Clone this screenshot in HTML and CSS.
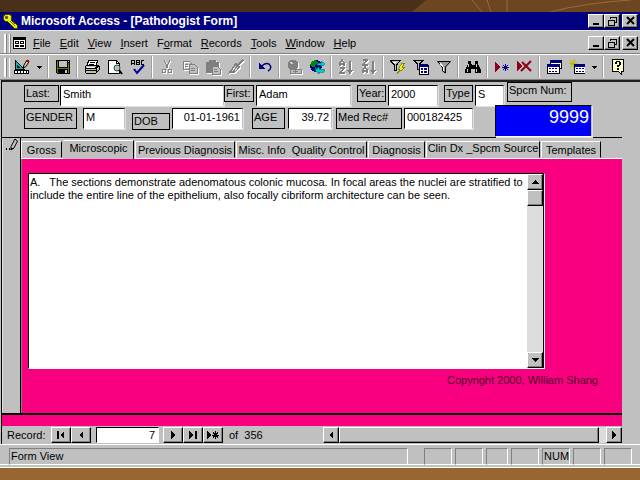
FILE: index.html
```
<!DOCTYPE html>
<html lang="en">
<head>
<meta charset="utf-8">
<title>Microsoft Access - [Pathologist Form]</title>
<link rel="stylesheet" href="styles.css">
</head>
<body>
<svg class="backdrop" width="228" height="12" viewBox="-14 0 228 12" aria-hidden="true">
  <path class="shade" d="M0 0H214V12H-14Z"/>
  <path class="ray" d="M46 0L56 12M61 0L65 12M81 0V12M124 12Q158 3 205 0"/>
</svg>
<div class="app">
  <header class="titlebar">
    <svg class="key" width="17" height="16" viewBox="0 0 17 16" aria-hidden="true"><path d="M1 3L4 1H8L10 4L9 7L15 12V15H12L6 9L3 8L1 6Z" fill="#ee0" stroke="#440"/><path d="M3 3H5V5H3ZM8 8L13 13" fill="#000080" stroke="#770"/><path d="M6 2L8 4" stroke="#fff"/></svg>
    <h1>Microsoft Access - [Pathologist Form]</h1>
    <div class="winbtns">
      <button aria-label="Minimize"><svg width="12" height="10" viewBox="0 0 12 10"><path d="M3 8H9" stroke-width="2"/></svg></button><button aria-label="Restore"><svg width="12" height="10" viewBox="0 0 12 10"><path d="M4 3V1H10V6H8M4 1.5H10M2 4.500H8V9H2ZM2 4H8"/></svg></button><button class="close" aria-label="Close"><svg width="12" height="10" viewBox="0 0 12 10"><path class="smooth" d="M3 1L10 8M10 1L3 8"/></svg></button>
    </div>
  </header>

  <nav class="menubar">
    <span class="grip"></span>
    <svg class="formicon" width="13" height="12" viewBox="0 0 13 12" aria-hidden="true"><path d="M0 0H13V12H0Z"/><path fill="#fff" d="M1 3H12V11H1Z"/><path d="M2 4H6V7H2ZM2 8H6V10H2ZM7 4H11V7H7ZM7 8H11V10H7Z"/><path fill="#fff" d="M3 5H5V6H3ZM8 5H10V6H8Z"/></svg>
    <a href="#"><u>F</u>ile</a><a href="#"><u>E</u>dit</a><a href="#"><u>V</u>iew</a><a href="#"><u>I</u>nsert</a><a href="#">F<u>o</u>rmat</a><a href="#"><u>R</u>ecords</a><a href="#"><u>T</u>ools</a><a href="#"><u>W</u>indow</a><a href="#"><u>H</u>elp</a>
    <div class="winbtns">
      <button aria-label="Minimize form"><svg width="12" height="10" viewBox="0 0 12 10"><path d="M3 8H9" stroke-width="2"/></svg></button><button aria-label="Restore form"><svg width="12" height="10" viewBox="0 0 12 10"><path d="M4 3V1H10V6H8M4 1.5H10M2 4.500H8V9H2ZM2 4H8"/></svg></button><button class="close" aria-label="Close form"><svg width="12" height="10" viewBox="0 0 12 10"><path class="smooth" d="M3 1L10 8M10 1L3 8"/></svg></button>
    </div>
  </nav>

  <div class="toolbar" role="toolbar" aria-label="Form view">
    <span class="grip"></span>
    <button aria-label="Design view"><svg viewBox="0 0 16 16"><path fill="#0bb" stroke="#000" d="M1.500 1.500L10.500 10.500H1.500Z"/><path fill="#c0c0c0" stroke="#000" d="M3.500 6.500L5.500 8.500H3.500Z"/><path fill="#fff" stroke="#000" d="M.5 11.500H14.500V14.500H.5Z"/><path d="M3 12H4V14H3ZM6 12H7V14H6ZM9 12H10V14H9ZM12 12H13V14H12Z"/><path class="smooth" fill="#dd8" stroke="#000" d="M9 9L10 6L13 1L15 2.500L12 7.500Z"/><path fill="#a00" d="M12 1H15V3H12Z"/></svg></button>
    <button class="caret" aria-label="More views"><svg viewBox="0 0 5 3"><path d="M0 0H5L3 3H2Z"/></svg></button>
    <i></i>
    <button aria-label="Save"><svg viewBox="0 0 16 16"><path d="M1 1H15V15H2L1 14Z"/><path fill="#770" d="M2 2H3V14H2ZM13 4H14V14H13ZM3 9H13V10H3Z"/><path fill="#c0c0c0" d="M4 2H12V8H4ZM13 2H14V3H13ZM10 11H12V14H10Z"/></svg></button>
    <i></i>
    <button aria-label="Print"><svg viewBox="0 0 16 16"><path fill="#fff" stroke="#000" d="M5 1H14L12 6H3Z"/><path stroke="#000" d="M6 3H11M5 5H10"/><path fill="#c0c0c0" stroke="#000" d="M1 8L3 6H14L15 7V11L12 14H2L1 12Z"/><path stroke="#000" d="M1 9H12L15 7M2 11H12M12 9V14"/><path stroke="#fff" d="M3 8H11"/><path stroke="#cc0" d="M8 12H11"/></svg></button>
    <button aria-label="Print preview"><svg viewBox="0 0 16 16"><path fill="#fff" stroke="#000" d="M1.500 1H9L12 4V14.500H1.500Z"/><path fill="none" stroke="#000" d="M9 1V4H12"/><circle class="smooth" cx="10" cy="9" r="3" fill="#9cc" stroke="#444"/><path class="smooth" stroke="#000" stroke-width="2" d="M12 11L15 15"/></svg></button>
    <button aria-label="Spelling"><svg viewBox="0 0 16 16"><path fill="none" stroke="#000" d="M1.500 6V2L3 1L4.500 2V6M1 4H5M6.500 1V5.500H9V1.500H6.500M6 3.500H9M14 1.500H11.500V5.500H14"/><path class="smooth" fill="none" stroke="#00009c" stroke-width="2" d="M4 10L7 14L14 6"/></svg></button>
    <i></i>
    <button class="off" disabled aria-label="Cut"><svg viewBox="0 0 16 16"><path d="M5 1L9 9M11 1L7 9"/><circle cx="5" cy="12" r="2"/><circle cx="11" cy="12" r="2"/></svg></button>
    <button class="off" disabled aria-label="Copy"><svg viewBox="0 0 16 16"><path d="M1 2H7L9 4V10H1ZM3 5H6M3 7H6"/><path class="sheet" d="M7 5H12L15 8V14H7ZM9 9H13M9 11H13"/></svg></button>
    <button class="off" disabled aria-label="Paste"><svg viewBox="0 0 16 16"><path class="solid" d="M1 3H4V1H10V3H13V13H1Z"/><path class="sheet" d="M7 7H12L15 10V15H7ZM9 10H12M9 12H13"/></svg></button>
    <button class="off" disabled aria-label="Format painter"><svg viewBox="0 0 16 16"><path class="solid" d="M8 4L12 8L7 13L1 14Z"/><path class="thick" d="M10 6L15 1"/><path class="glint" d="M4 12L8 7M7 12L10 8"/></svg></button>
    <i></i>
    <button aria-label="Undo"><svg viewBox="0 0 16 16"><path fill="#000080" d="M2 4V10H8Z"/><path class="smooth" fill="none" stroke="#000080" stroke-width="1.500" d="M4 8Q8 3 12 5Q16 9 11 12"/></svg></button>
    <i></i>
    <button class="off" disabled aria-label="Insert hyperlink"><svg viewBox="0 0 16 16"><circle class="solid" cx="7" cy="6" r="5"/><path class="sheet" d="M4 10H9V14H4ZM9 10H15V14H9ZM7 12H12"/><path class="glint" d="M4 3L7 5"/></svg></button>
    <button aria-label="Web toolbar"><svg viewBox="0 0 16 16"><circle cx="7" cy="7" r="6" fill="#000090"/><path fill="#080" d="M3 2L7 1L9 4L6 6L7 9L4 8L1 6ZM6 9L9 10L7 13Z"/><path fill="#0cc" stroke="#055" stroke-width=".5" d="M8 4H12V2L16 5L12 8V6H8ZM15 10H10V8L6 11.500L10 15V13H15Z"/></svg></button>
    <i></i>
    <button class="off" disabled aria-label="Sort ascending"><svg viewBox="0 0 16 16"><path class="bold" d="M2 7V4L4 1L6 4V7M2 5H6M2 9H6L2 14H7M12 2V14M10 11L12 14L14 11"/></svg></button>
    <button class="off" disabled aria-label="Sort descending"><svg viewBox="0 0 16 16"><path class="bold" d="M2 1H6L2 6H7M2 14V11L4 8L6 11V14M2 12H6M12 2V14M10 11L12 14L14 11"/></svg></button>
    <i></i>
    <button aria-label="Filter by selection"><svg viewBox="0 0 16 16"><path fill="#c0c0c0" stroke="#000" d="M0 1.500H10L6.500 6V11H4.500V6Z"/><path stroke="#fff" d="M3 3H6"/><path fill="#ee0" stroke="#660" stroke-width=".7" d="M12 4H15L12 8H15L7 15L10 10H8Z"/></svg></button>
    <button aria-label="Filter by form"><svg viewBox="0 0 16 16"><path fill="#c0c0c0" stroke="#000" d="M1 1.500H10L6.500 5V10H4.500V5Z"/><path fill="#fff" stroke="#000" d="M6 6H15V15H6Z"/><path fill="#000080" d="M6 5H15V8H6ZM8 9H10V11H8ZM11 9H14V11H11ZM8 12H10V14H8ZM11 12H14V14H11Z"/></svg></button>
    <button aria-label="Apply filter"><svg viewBox="0 0 16 16"><path class="smooth" fill="#999" stroke="#000" d="M1.500 2.500H14.500L9.500 8V14L6.500 12V8Z"/><path stroke="#fff" d="M4 4L7 8V12"/></svg></button>
    <i></i>
    <button aria-label="Find"><svg viewBox="0 0 16 16"><path d="M3 2H6V5L7 6H9L10 5V2H13V5L16 11V14H10V10H6V14H0V11L3 5Z"/><path stroke="#ccc" d="M2 10V13M4 5L3 8M11 10V13M11 5V8"/></svg></button>
    <i></i>
    <button aria-label="New record"><svg viewBox="0 0 16 16"><path fill="#900018" d="M1 3L6 8L1 13Z"/><path stroke="#000090" d="M11.500 5V12M8 8.500H15M9 6L14 11M14 6L9 11"/></svg></button>
    <button aria-label="Delete record"><svg viewBox="0 0 16 16"><path fill="#900018" d="M0 2L5 7L0 12Z"/><path class="smooth" stroke="#900018" stroke-width="2" d="M5 3L14 12M14 2L4 12"/></svg></button>
    <i></i>
    <button aria-label="Database window"><svg viewBox="0 0 16 16"><path fill="#fff" stroke="#000" d="M4 1.500H15V9H4Z"/><path fill="#000080" d="M4 1H15V4H4Z"/><path fill="#fff" stroke="#000" d="M1 5.500H13V14.500H1Z"/><path fill="#000080" d="M1 5H13V8H1ZM3 9H5V10H3ZM6 9H8V10H6ZM9 9H11V10H9ZM3 12H5V13H3ZM6 12H8V13H6ZM9 12H11V13H9Z"/></svg></button>
    <button aria-label="New object"><svg viewBox="0 0 16 16"><path stroke="#bb0" d="M4 0V9M0 4.500H8M1 1L7 8M7 1L1 8"/><path fill="#fff" stroke="#000" d="M5 5.500H16V14.500H5Z"/><path fill="#000080" d="M5 5H16V8H5ZM7 9H9V10H7ZM10 9H12V10H10ZM13 9H15V10H13ZM7 12H9V13H7ZM10 12H12V13H10ZM13 12H15V13H13Z"/></svg></button>
    <button class="caret" aria-label="More objects"><svg viewBox="0 0 5 3"><path d="M0 0H5L3 3H2Z"/></svg></button>
    <i></i>
    <button aria-label="Help"><svg viewBox="0 0 16 16"><path fill="#ffffc8" stroke="#000" d="M2.500 .5H13.500V12.500H11.500V15.500L8.500 12.500H2.500Z"/><path d="M5 3H6V2H10V3H11V6H10V7H9V8H7V6H9V3H7V5H5ZM7 9H9V11H7Z"/></svg></button>
  </div>

  <main class="form">
    <section class="patient">
      <div class="row top">
        <label for="last">Last:</label><input id="last" class="w-last" value="Smith">
        <label for="first" class="l-first">First:</label><input id="first" class="w-first" value="Adam">
        <label for="year" class="l-year">Year:</label><input id="year" class="w-year" value="2000">
        <label for="type" class="l-type">Type</label><input id="type" class="w-type" value="S">
        <label for="spcm" class="l-spcm">Spcm Num:</label>
      </div>
      <div class="row bottom">
        <label for="gender" class="l-gender">GENDER</label><input id="gender" class="w-gender" value="M">
        <label for="dob" class="l-dob">DOB</label><input id="dob" class="w-dob" value="01-01-1961">
        <label for="age" class="l-age">AGE</label><input id="age" class="w-age" value="39.72">
        <label for="med" class="l-med">Med Rec#</label><input id="med" class="w-med" value="000182425">
        <input id="spcm" class="w-spcm" value="9999">
      </div>
    </section>

    <div class="record">
      <div class="selector">
        <svg width="14" height="14" viewBox="0 0 14 14" aria-hidden="true"><path d="M1 10H2V12H1ZM4 10H5V12H4Z"/><path class="smooth" fill="#c0c0c0" stroke="#000" d="M10 1L12.500 3L9 10L6 12V8.500Z"/><path d="M6 10H8L6 13Z"/></svg>
      </div>
      <div class="pages">
        <div class="tabs" role="tablist">
          <button role="tab" class="t-gross">Gross</button><button role="tab" class="t-micro" aria-selected="true">Microscopic</button><button role="tab" class="t-prev">Previous Diagnosis</button><button role="tab" class="t-misc">Misc. Info&nbsp; Quality Control</button><button role="tab" class="t-diag">Diagnosis</button><button role="tab" class="t-clin">Clin Dx _Spcm Source</button><button role="tab" class="t-temp">Templates</button>
        </div>
        <div class="page" role="tabpanel">
          <div class="memo">
            <textarea aria-label="Microscopic description">A.&nbsp;&nbsp; The sections demonstrate adenomatous colonic mucosa. In focal areas the nuclei are stratified to include the entire line of the epithelium, also focally cibriform architecture can be seen.</textarea>
            <div class="vscroll">
              <button aria-label="Scroll up"><svg width="8" height="4" viewBox="0 0 8 4"><path d="M0 4L4 0L8 4Z"/></svg></button>
              <span class="thumb"></span>
              <button class="down" aria-label="Scroll down"><svg width="8" height="4" viewBox="0 0 8 4"><path d="M0 0H8L4 4Z"/></svg></button>
            </div>
          </div>
          <p class="copyright">Copyright 2000, William Shang</p>
        </div>
      </div>
    </div>
    <div class="formfoot"></div>

    <div class="recnav">
      <label for="rec">Record:</label>
      <button aria-label="First record"><svg viewBox="0 0 12 8"><path d="M2 0H4V8H2ZM9 0V8L5 4Z"/></svg></button><button aria-label="Previous record"><svg viewBox="0 0 12 8"><path d="M8 0V8L4 4Z"/></svg></button>
      <input id="rec" value="7">
      <button aria-label="Next record"><svg viewBox="0 0 12 8"><path d="M4 0V8L8 4Z"/></svg></button><button aria-label="Last record"><svg viewBox="0 0 12 8"><path d="M2 0V8L6 4ZM8 0H10V8H8Z"/></svg></button><button aria-label="Add record"><svg viewBox="0 0 12 8"><path d="M0 0V8L4 4Z"/><path stroke="#000" d="M8.500 0V8M5 4H12M6 1.500L11 6.500M11 1.500L6 6.500"/></svg></button>
      <span class="of">of&nbsp; 356</span>
      <div class="hscroll">
        <button aria-label="Scroll left"><svg viewBox="0 0 12 8"><path d="M8 0V8L4 4Z"/></svg></button><span class="thumb"></span><button aria-label="Scroll right"><svg viewBox="0 0 12 8"><path d="M4 0V8L8 4Z"/></svg></button>
      </div>
    </div>
  </main>

  <footer class="status">
    <span class="msg">Form View</span>
    <span></span><span></span><span class="narrow"></span><span></span><span>NUM</span><span></span><span></span>
  </footer>
</div>
</body>
</html>
```
FILE: styles.css
```
* { box-sizing: border-box; }

body {
  margin: 0;
  min-height: 100vh;
  padding: 12px 0;
  display: flex;
  flex-direction: column;
  background: linear-gradient(#4b3019 12px, #996633 30px);
  font: 11px/13px "Liberation Sans", Arial, sans-serif;
  color: #000;
}

.backdrop { position: absolute; top: 0; right: 0; }
.backdrop .shade { fill: #6b4621; shape-rendering: auto; }
.backdrop .ray { fill: none; stroke: #a06838; shape-rendering: auto; }

.app { flex: 1; display: flex; flex-direction: column; background: #c0c0c0; }
svg { display: block; flex: none; shape-rendering: crispEdges; }
.smooth { shape-rendering: auto; }
button, input, textarea { font: inherit; color: inherit; margin: 0; padding: 0; border-radius: 0; }
button { display: flex; align-items: center; justify-content: center; background: #c0c0c0; border: 0; }

/* Title bar */
.titlebar { height: 18px; display: flex; align-items: center; padding: 0 2px; gap: 2px; background: #000080; color: #fff; }
.titlebar h1 { margin: 0; flex: 1; font-size: 12px; line-height: 18px; }

.winbtns { display: flex; margin-left: auto; }
.winbtns button { width: 16px; height: 14px; border: 1px solid; border-color: #fff #000 #000 #fff; box-shadow: inset -1px -1px #808080; color: #000; }
.winbtns .close { margin-left: 2px; }
.winbtns path { fill: none; stroke: #000; }
.winbtns .smooth { stroke-width: 2px; }

/* Menu bar */
.menubar { height: 24px; display: flex; align-items: center; gap: 9px; padding: 2px 2px 0 4px; border-top: 1px solid #e8e8e8; border-bottom: 1px solid #808080; }
.menubar a { color: #000; text-decoration: none; }
.formicon { margin-right: -2px; }
.grip { flex: none; width: 6px; height: 19px; border: solid; border-width: 0 1px 0 2px; border-color: #fff; background: linear-gradient(90deg, #808080 1px, #c0c0c0 1px); box-shadow: 1px 0 #808080; }
.menubar .grip { margin-right: -6px; }

/* Toolbar */
.toolbar { height: 26px; display: flex; align-items: center; padding-left: 4px; border-top: 1px solid #fff; border-bottom: 1px solid #808080; }
.toolbar button { width: 23px; height: 22px; flex: none; }
.toolbar button svg { width: 16px; height: 16px; }
.toolbar .caret { width: 12px; }
.toolbar .caret svg { width: 5px; height: 3px; }
.toolbar i { flex: none; width: 2px; height: 22px; margin: 0 2px; background: linear-gradient(90deg, #a0a0a0 50%, #fff 50%); }
.off path, .off circle { fill: none; stroke: #808080; }
.off .solid { fill: #808080; }
.off .sheet { fill: #c0c0c0; }
.off .thick { stroke-width: 2px; }
.off .bold { stroke-width: 1.5px; }
.off .glint { stroke: #ddd; }
.off svg { filter: drop-shadow(1px 1px #fff); }

/* Form */
.form { flex: 1; display: flex; flex-direction: column; margin: 0 0 0 1px; border-top: 2px solid #202020; border-left: 1px solid #000; padding-right: 18px; }
.patient { border-bottom: 1px solid #000; padding: 0 30px 0 22px; }
.row { display: flex; align-items: flex-start; }
.row label { flex: none; height: 17px; padding: 0 1px; border: 1px solid #000; line-height: 15px; white-space: nowrap; }
.row input { flex: none; height: 21px; padding: 0 2px 3px; background: #fff; border: 1px solid; border-color: #000 #c0c0c0 #fff #000; box-shadow: 1px 1px #e0e0e0; min-width: 0; }
.top { height: 23px; padding-top: 3px; }
.top label:first-child { width: 35px; margin-right: 1px; }
.row .w-last { flex: 1; }
.row .l-first { width: 30px; margin-right: 2px; }
.w-first { width: 95px; }
.row .l-year { width: 29px; margin: 0 2px 0 6px; }
.w-year { width: 50px; }
.row .l-type { width: 29px; margin: 0 2px 0 6px; }
.w-type { width: 29px; }
.row .l-spcm { width: 65px; height: 20px; margin: -3px 20px 0 3px; }

.bottom { height: 32px; }
.bottom > * { margin-top: 3px; }
.row .l-gender { width: 53px; height: 21px; margin-right: 6px; line-height: 17px; }
.w-gender { width: 42px; }
.row .l-dob { width: 38px; margin: 8px 2px 0 7px; }
.w-dob, .w-age { text-align: right; }
.w-dob { width: 71px; }
.row .l-age { width: 33px; height: 21px; margin: 3px 3px 0 9px; line-height: 16px; }
.w-age { width: 44px; }
.row .l-med { width: 66px; height: 21px; margin: 3px 2px 0 4px; line-height: 16px; }
.w-med { width: 69px; }
.row .w-spcm { width: 97px; height: 32px; margin: 0 0 0 auto; padding: 0 2px 8px; background: #0000f8; color: #fff; font-size: 18px; text-align: right; }

.record { flex: 1; display: flex; border-bottom: 2px solid #000; }
.selector { width: 19px; padding-left: 2px; border-right: 1px solid #000; border-left: 1px solid #e0e0e0; }
.pages { flex: 1; display: flex; flex-direction: column; min-width: 0; }
.tabs { display: flex; gap: 1px; height: 21px; padding: 3px 0 1px; border-bottom: 1px solid #fff; }
.tabs button { height: 17px; padding: 1px 0 0; border: 1px solid; border-color: #fff #000 #c0c0c0 #fff; white-space: nowrap; }
.tabs .t-gross { width: 41px; }
.tabs .t-micro { width: 71px; height: 20px; margin-top: -1px; padding-bottom: 4px; border-left-color: #c0c0c0; }
.tabs .t-prev { width: 100px; }
.tabs .t-misc { width: 131px; }
.tabs .t-diag { width: 57px; }
.tabs .t-clin { width: 114px; padding-bottom: 3px; }
.tabs .t-temp { width: 60px; }

.page { flex: 1; display: flex; flex-direction: column; padding: 14px 24px 0 6px; background: #f80080; border-left: 1px solid #808080; }
.memo { flex: 1; display: flex; margin-right: 53px; border: 1px solid; border-color: #000 #fff #fff #000; background: #fff; }
.memo textarea { flex: 1; min-width: 0; padding: 2px 1px; border: 0; outline: 0; resize: none; overflow: hidden; background: #fff; }
.vscroll { width: 17px; display: flex; flex-direction: column; background: #dcdcdc; border-right: 1px solid #000; }
.vscroll button, .hscroll button, .thumb, .recnav button { border: 1px solid; border-color: #fff #000 #000 #fff; box-shadow: inset -1px -1px #808080; background: #c0c0c0; }
.vscroll button { height: 16px; }
.vscroll .thumb { height: 16px; }
.vscroll .down { margin-top: auto; }
.copyright { margin: 5px 0 26px; text-align: right; color: #500028; }
.formfoot { height: 11px; background: #f80080; }

/* Record navigation */
.recnav { height: 18px; display: flex; align-items: center; padding-left: 5px; }
.recnav label { width: 44px; }
.recnav button { flex: none; width: 20px; height: 16px; }
.recnav button svg { width: 12px; height: 8px; }
.recnav input { width: 63px; height: 16px; margin: 0 4px 0 5px; padding: 0 3px; text-align: right; background: #fff; border: 1px solid; border-color: #000 #fff #fff #000; }
.of { width: 36px; margin-left: 6px; }
.hscroll { flex: 1; display: flex; margin-left: 58px; background: #dcdcdc; }
.recnav .hscroll button { width: 16px; }
.hscroll .thumb { flex: 1; margin-right: 7px; }

/* Status bar */
.status { height: 24px; display: flex; align-items: center; gap: 3px; padding: 0 8px 0 9px; border-top: 1px solid #fff; border-bottom: 1px solid #fff; box-shadow: inset 0 -2px #c0c0c0, inset 0 -3px #fff; }
.status span { width: 28px; height: 17px; padding: 0 1px; border: 1px solid; border-color: #808080 #fff #fff #808080; line-height: 15px; }
.status .narrow { width: 22px; }
.status .msg { flex: 1; margin-right: 13px; }
```
